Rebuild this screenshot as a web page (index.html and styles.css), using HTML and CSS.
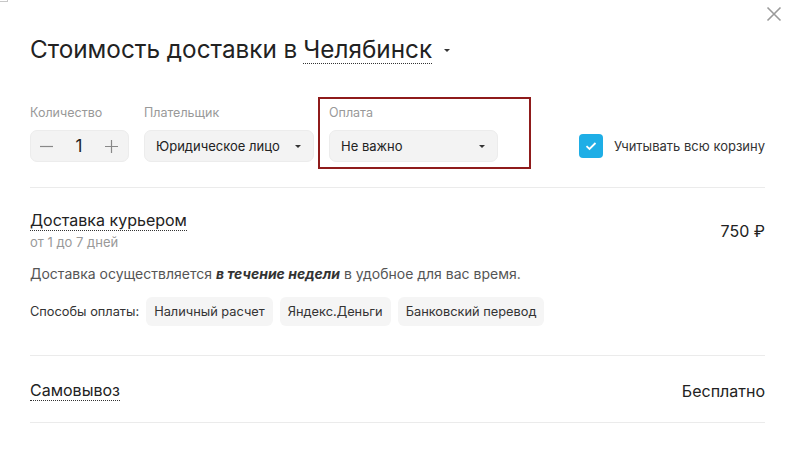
FILE: index.html
```html
<!DOCTYPE html>
<html lang="ru">
<head>
<meta charset="utf-8">
<link rel="stylesheet" href="styles.css">
</head>
<body>
<div class="corner"></div>
<div class="modal">
  <button class="close" aria-label="Закрыть">
    <svg width="16" height="16" viewBox="0 0 16 16"><path d="M1.5 1.5L14.5 14.5M14.5 1.5L1.5 14.5" stroke="#9a9a9a" stroke-width="1.6" fill="none"/></svg>
  </button>
  <h1 class="title">Стоимость доставки в <span class="city">Челябинск</span><span class="caret caret-title"></span></h1>

  <div class="controls">
    <div class="field">
      <div class="label">Количество</div>
      <div class="qty">
        <svg class="qbtn" width="13" height="13" viewBox="0 0 13 13"><path d="M0 6.5H13" stroke="#888" stroke-width="1.2"/></svg>
        <span class="qval">1</span>
        <svg class="qbtn" width="13" height="13" viewBox="0 0 13 13"><path d="M0 6.5H13M6.5 0V13" stroke="#888" stroke-width="1.2"/></svg>
      </div>
    </div>
    <div class="field">
      <div class="label">Плательщик</div>
      <div class="select select-payer"><span>Юридическое лицо</span><span class="caret"></span></div>
    </div>
    <div class="field field-pay">
      <div class="label">Оплата</div>
      <div class="select select-pay"><span>Не важно</span><span class="caret"></span></div>
      <div class="highlight"></div>
    </div>
    <label class="check">
      <span class="box">
        <svg width="12" height="10" viewBox="0 0 12 10"><path d="M1.5 5.2L4.5 8L10.5 2" stroke="#fff" stroke-width="1.8" fill="none"/></svg>
      </span>
      <span class="check-text">Учитывать всю корзину</span>
    </label>
  </div>

  <div class="option option-courier">
    <div class="row">
      <div>
        <div class="opt-name">Доставка курьером</div>
        <div class="opt-term">от 1 до 7 дней</div>
      </div>
      <div class="opt-price">750 ₽</div>
    </div>
    <p class="desc">Доставка осуществляется <b><i>в течение недели</i></b> в удобное для вас время.</p>
    <div class="pays">
      <span class="pays-label">Способы оплаты:</span>
      <span class="chip">Наличный расчет</span>
      <span class="chip">Яндекс.Деньги</span>
      <span class="chip">Банковский перевод</span>
    </div>
  </div>

  <div class="option option-pickup">
    <div class="row row-center">
      <div class="opt-name">Самовывоз</div>
      <div class="opt-price">Бесплатно</div>
    </div>
  </div>
</div>
</body>
</html>
```

FILE: styles.css
```css
* { box-sizing: border-box; }
html, body { margin: 0; padding: 0; background: #fff; }
body {
  font-family: Inter, "Noto Sans", sans-serif;
  color: #222;
  width: 791px;
  height: 458px;
  overflow: hidden;
  position: relative;
}
.corner {
  position: absolute;
  left: 0; top: 0;
  width: 8px; height: 2px;
  border: 1px solid #c8c8c8;
  border-top: none; border-left: none;
}
.modal {
  position: relative;
  padding: 33px 26px 0 30px;
}
.close {
  position: absolute;
  right: 9px; top: 6px;
  width: 16px; height: 16px;
  padding: 0; border: 0; background: none;
}
.title {
  margin: 0;
  font-size: 24.3px;
  font-weight: 400;
  line-height: 30px;
  color: #222;
  display: flex;
  align-items: center;
}
.city {
  margin-left: 6px;
  border-bottom: 1px dotted #333;
  line-height: 28px;
  margin-top: 2px;
}
.caret {
  display: inline-block;
  width: 0; height: 0;
  border-left: 3px solid transparent;
  border-right: 3px solid transparent;
  border-top: 3px solid #333;
}
.caret-title { margin-left: 12px; margin-top: 4px; }

.controls {
  display: flex;
  align-items: flex-end;
  gap: 15px;
  margin-top: 41px;
  padding-bottom: 25px;
  border-bottom: 1px solid #ebebeb;
}
.field { display: flex; flex-direction: column; }
.field-pay { position: relative; }
.label {
  font-size: 12.5px;
  color: #999;
  line-height: 16px;
  margin-bottom: 9px;
}
.qty, .select {
  height: 32px;
  background: #f3f3f3;
  border: 1px solid #ececec;
  border-radius: 7px;
  display: flex;
  align-items: center;
}
.qty {
  width: 99px;
  justify-content: space-between;
  padding: 0 10px 0 9px;
}
.qval { font-size: 17px; color: #222; }
.select {
  justify-content: space-between;
  padding: 0 12px 0 11px;
  font-size: 13px;
  color: #222;
}
.select-payer { width: 170px; }
.select-pay { width: 169px; }
.highlight {
  position: absolute;
  left: -11px; top: -8px;
  width: 213px; height: 72px;
  border: 2px solid #8f1b1b;
}
.check {
  margin-left: auto;
  display: flex;
  align-items: center;
  gap: 11px;
  height: 32px;
}
.box {
  width: 24px; height: 24px;
  border-radius: 4px;
  background: #1eaee6;
  display: flex;
  align-items: center;
  justify-content: center;
}
.check-text { font-size: 13px; color: #333; }

.option { border-bottom: 1px solid #ebebeb; }
.option-courier { padding: 22px 0 29px; }
.option-pickup { padding: 24px 0 21px; }
.row { display: flex; justify-content: space-between; align-items: center; }
.opt-name {
  font-size: 16px;
  line-height: 20px;
  display: inline-block;
  border-bottom: 1px dotted #333;
  color: #222;
}
.opt-term { font-size: 13px; color: #999; margin-top: 3px; line-height: 17px; }
.opt-price { font-size: 16px; color: #222; }
.desc {
  margin: 13px 0 0;
  font-size: 14px;
  color: #555;
  line-height: 19px;
}
.desc b { color: #333; }
.pays {
  display: flex;
  align-items: center;
  gap: 7px;
  margin-top: 14px;
}
.pays-label { font-size: 12.8px; color: #333; margin-right: 0; }
.chip {
  height: 29px;
  line-height: 29px;
  padding: 0 8px;
  background: #f5f5f5;
  border-radius: 6px;
  font-size: 12.8px;
  color: #333;
}
```
